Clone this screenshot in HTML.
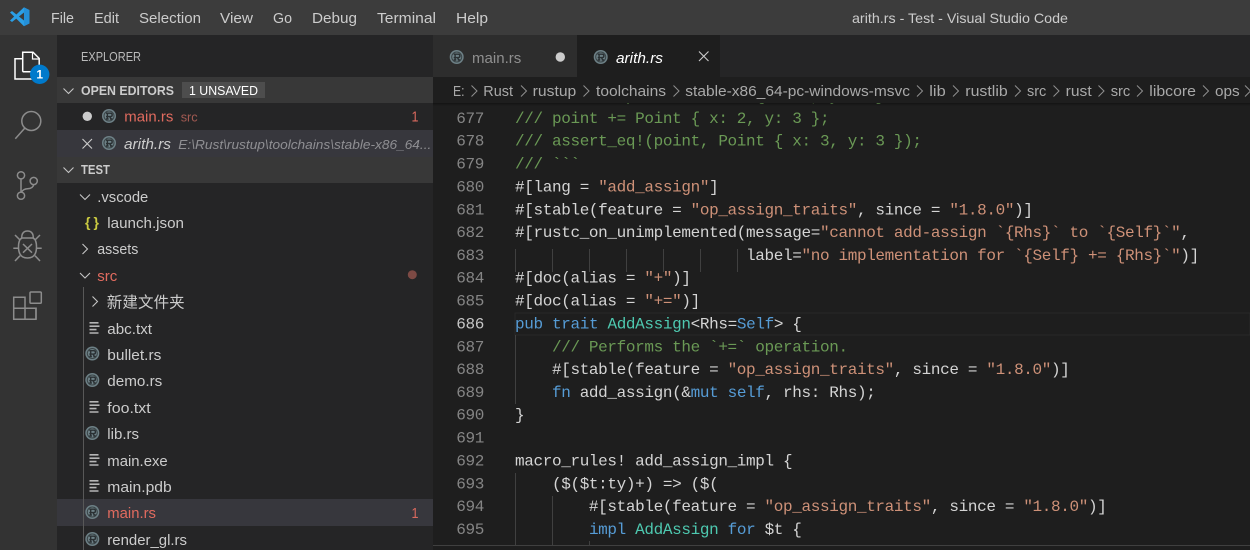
<!DOCTYPE html>
<html lang="en">
<head>
<meta charset="utf-8">
<title>arith.rs - Test - Visual Studio Code</title>
<style>
html,body{margin:0;padding:0;width:1250px;height:550px;overflow:hidden;background:#1e1e1e}
svg{display:block;position:absolute;left:0;top:0}
text{font-family:"Liberation Sans","Noto Sans CJK SC",sans-serif;white-space:pre}
.m{font-size:15px;fill:#ccc}
.s{font-size:15px;fill:#ccc}
.c{font-family:"Liberation Mono",monospace;font-size:16px;letter-spacing:-.36px;fill:#d4d4d4}
.n{font-family:"Liberation Mono",monospace;font-size:16px;letter-spacing:-.36px;fill:#858585;text-anchor:end}
.g{fill:#6a9955}.o{fill:#ce9178}.b{fill:#569cd6}.t{fill:#4ec9b0}
.bc{font-size:15px;fill:#a9a9a9}
.ch{fill:none;stroke:#c5c5c5;stroke-width:1.1}
.bch{fill:none;stroke:#8f8f8f;stroke-width:1}
.ai{fill:none;stroke:#8c8c8c;stroke-width:1.5}
.ig{stroke:#404040;stroke-width:1}
.tf{stroke:#b5b5b5;stroke-width:1.6}
</style>
</head>
<body>
<svg width="1250" height="550" viewBox="0 0 1250 550" xmlns="http://www.w3.org/2000/svg">
<defs>
<g id="ru">
<circle r="7" fill="#6d8086"/>
<circle r="5" fill="none" stroke="#3a4447" stroke-width="1"/>
<path d="M-3 -2.8H1.4Q3.2 -2.8 3.2 -1Q3.2 .6 1.4 .6H-3M-1.6 -2.8V3M.8 .6L2 3M-3 3H-.4M1 3H3.4" fill="none" stroke="#2a3033" stroke-width="1.4"/>
</g>
<g id="tx">
<path class="tf" d="M0 .8H9M0 4.2H10M0 7.6H7M0 11H9"/>
</g>
<linearGradient id="sh" x1="0" y1="0" x2="0" y2="1">
<stop offset="0" stop-color="#000" stop-opacity=".35"/>
<stop offset="1" stop-color="#000" stop-opacity="0"/>
</linearGradient>
</defs>

<!-- base areas -->
<rect x="0" y="0" width="1250" height="550" fill="#1e1e1e"/>
<rect x="0" y="0" width="1250" height="35" fill="#3c3c3c"/>
<rect x="0" y="35" width="57" height="515" fill="#333333"/>
<rect x="57" y="35" width="376" height="515" fill="#252526"/>

<!-- title bar -->
<path d="M24 7.3L29.5 10V23.5L24 26.2Z" fill="#2490d8"/>
<path d="M10 12.5L12 11L24 20.5V26.2Z" fill="#2b9fe6"/>
<path d="M10 20.5L12 22L24 12.5V7.3Z" fill="#2b9fe6"/>
<text class="m" x="51" y="23" textLength="23" lengthAdjust="spacingAndGlyphs">File</text>
<text class="m" x="94" y="23" textLength="25" lengthAdjust="spacingAndGlyphs">Edit</text>
<text class="m" x="139" y="23" textLength="62" lengthAdjust="spacingAndGlyphs">Selection</text>
<text class="m" x="220" y="23" textLength="33" lengthAdjust="spacingAndGlyphs">View</text>
<text class="m" x="273" y="23" textLength="19" lengthAdjust="spacingAndGlyphs">Go</text>
<text class="m" x="312" y="23" textLength="45" lengthAdjust="spacingAndGlyphs">Debug</text>
<text class="m" x="377" y="23" textLength="59" lengthAdjust="spacingAndGlyphs">Terminal</text>
<text class="m" x="456" y="23" textLength="32" lengthAdjust="spacingAndGlyphs">Help</text>
<text class="m" x="852" y="23" textLength="216" lengthAdjust="spacingAndGlyphs" style="font-size:14px">arith.rs - Test - Visual Studio Code</text>

<!-- activity bar -->
<path d="M22.7 71.7V52.2H33L39.2 58.4V66" fill="none" stroke="#fff" stroke-width="1.5"/>
<path d="M32.5 52.2V59H39.2" fill="none" stroke="#fff" stroke-width="1.2"/>
<path d="M22.7 71.7H31M22.7 58.8H15V79H32V72" fill="none" stroke="#fff" stroke-width="1.5"/>
<circle cx="39.7" cy="74.3" r="9.7" fill="#007acc"/>
<text x="39.7" y="78.6" text-anchor="middle" style="font-size:12px;font-weight:bold;fill:#fff">1</text>
<circle class="ai" cx="31.3" cy="121" r="9.5"/>
<path class="ai" d="M15.3 138.7L24.7 128.3"/>
<circle class="ai" cx="21" cy="175.3" r="3.6"/>
<circle class="ai" cx="33.7" cy="181" r="3.6"/>
<circle class="ai" cx="21" cy="195.7" r="3.6"/>
<path class="ai" d="M21 179V192M33.7 184.6Q33 188.5 27.5 188.8Q23.5 189 21.5 192"/>
<path class="ai" d="M21.7 238Q21.7 231 27.5 231Q33.3 231 33.3 238"/>
<path class="ai" d="M18.5 247Q18.5 239.5 22 238H33Q36.5 239.5 36.5 247Q36.5 258 27.5 258Q18.5 258 18.5 247Z"/>
<path class="ai" d="M23 244L32 252.7M32 244L23 252.7M13.3 248.3H18.5M36.5 248.3H41.7M15 235L20 240M40 235L35 240M15 261L20 255.7M40 261L35 255.7"/>
<rect class="ai" x="30" y="292" width="11.3" height="11.3" rx="1"/>
<path class="ai" d="M13.7 297.3H25V319.3H13.7ZM13.7 308.3H36V319.3H25"/>
<path class="ai" d="M25 308.3H36V319.3"/>

<!-- sidebar -->
<text x="81" y="61" textLength="60" lengthAdjust="spacingAndGlyphs" style="font-size:13px;fill:#bbb">EXPLORER</text>
<rect x="57" y="77" width="376" height="26" fill="#383838"/>
<path class="ch" d="M63.5 88.5L68.5 93.5L73.5 88.5"/>
<text x="81" y="95" textLength="93" lengthAdjust="spacingAndGlyphs" style="font-size:13px;font-weight:bold;fill:#ccc">OPEN EDITORS</text>
<rect x="182" y="82" width="83" height="16" fill="#4d4d4d"/>
<text x="189" y="95" textLength="69" lengthAdjust="spacingAndGlyphs" style="font-size:13px;fill:#fff">1 UNSAVED</text>

<circle cx="87.3" cy="116.3" r="4.7" fill="#ccc"/>
<use href="#ru" x="109" y="116"/>
<text class="s" x="124.3" y="121.5" textLength="49" lengthAdjust="spacingAndGlyphs" style="fill:#e16b5f">main.rs</text>
<text x="180.7" y="121.5" textLength="17" lengthAdjust="spacingAndGlyphs" style="font-size:13px;fill:#a35a52">src</text>
<text x="411.5" y="121.5" textLength="7" lengthAdjust="spacingAndGlyphs" style="font-size:15px;fill:#d9695e">1</text>

<rect x="57" y="130" width="376" height="27" fill="#37373d"/>
<path d="M82.5 139L92 148.5M92 139L82.5 148.5" stroke="#ccc" stroke-width="1.1" fill="none"/>
<use href="#ru" x="109" y="143"/>
<text class="s" x="124" y="149" textLength="47" lengthAdjust="spacingAndGlyphs" style="font-style:italic">arith.rs</text>
<text x="178.3" y="149" textLength="253" lengthAdjust="spacingAndGlyphs" style="font-size:13px;font-style:italic;fill:#8f8f93">E:\Rust\rustup\toolchains\stable-x86_64...</text>

<rect x="57" y="157" width="376" height="26" fill="#383838"/>
<path class="ch" d="M63.5 167.5L68.5 172.5L73.5 167.5"/>
<text x="81" y="174" textLength="29" lengthAdjust="spacingAndGlyphs" style="font-size:13px;font-weight:bold;fill:#ccc">TEST</text>

<rect x="57" y="499" width="376" height="27" fill="#37373d"/>
<path d="M83.5 287V550" stroke="#585858" stroke-width="1"/>

<path class="ch" d="M80 194.5L85 199.5L90 194.5"/>
<text class="s" x="97.3" y="202" textLength="51" lengthAdjust="spacingAndGlyphs">.vscode</text>
<text x="85" y="227" textLength="14" lengthAdjust="spacing" style="font-size:14px;font-weight:bold;fill:#cbcb41">{}</text>
<text class="s" x="107.3" y="228" textLength="76.7" lengthAdjust="spacingAndGlyphs">launch.json</text>
<path class="ch" d="M82.5 244L87.5 249L82.5 254"/>
<text class="s" x="97.3" y="254" textLength="41" lengthAdjust="spacingAndGlyphs">assets</text>
<path class="ch" d="M80 273L85 278L90 273"/>
<text class="s" x="97.3" y="281" textLength="20" lengthAdjust="spacingAndGlyphs" style="fill:#e16b5f">src</text>
<circle cx="412.3" cy="274.7" r="4.5" fill="#7d4a44"/>
<path class="ch" d="M92.5 296.5L97.5 301.5L92.5 306.5"/>
<text x="106.7" y="307.5" textLength="78" style="font-size:15.5px;fill:#ccc;font-family:'Liberation Sans','Noto Sans CJK SC',sans-serif">新建文件夹</text>
<use href="#tx" x="89.5" y="322"/>
<text class="s" x="107.3" y="334" textLength="44.7" lengthAdjust="spacingAndGlyphs">abc.txt</text>
<use href="#ru" x="92.3" y="353.5"/>
<text class="s" x="107.3" y="360" textLength="54" lengthAdjust="spacingAndGlyphs">bullet.rs</text>
<use href="#ru" x="92.3" y="380"/>
<text class="s" x="107.3" y="386" textLength="55" lengthAdjust="spacingAndGlyphs">demo.rs</text>
<use href="#tx" x="89.5" y="401"/>
<text class="s" x="107.3" y="413" textLength="43.4" lengthAdjust="spacingAndGlyphs">foo.txt</text>
<use href="#ru" x="92.3" y="433"/>
<text class="s" x="107.3" y="439" textLength="31.7" lengthAdjust="spacingAndGlyphs">lib.rs</text>
<use href="#tx" x="89.5" y="454"/>
<text class="s" x="107.3" y="466" textLength="60.4" lengthAdjust="spacingAndGlyphs">main.exe</text>
<use href="#tx" x="89.5" y="480"/>
<text class="s" x="107.3" y="492" textLength="64.4" lengthAdjust="spacingAndGlyphs">main.pdb</text>
<use href="#ru" x="92.3" y="512"/>
<text class="s" x="107.3" y="518" textLength="48.7" lengthAdjust="spacingAndGlyphs" style="fill:#e16b5f">main.rs</text>
<text x="411.5" y="518" textLength="7" lengthAdjust="spacingAndGlyphs" style="font-size:15px;fill:#d9695e">1</text>
<use href="#ru" x="92.3" y="539"/>
<text class="s" x="107.3" y="545" textLength="79.7" lengthAdjust="spacingAndGlyphs">render_gl.rs</text>

<!-- code -->
<rect x="515" y="313" width="735" height="22" fill="none" stroke="#282828" stroke-width="1"/>
<path class="ig" d="M515.5 249V272M552.5 249V272M589.5 249V272M626.5 249V272M663.5 249V272M700.5 249V272M737.5 249V272M515.5 335V404M515.5 473V545M552.5 496V545M589.5 541V545"/>

<g transform="translate(0,-.5)">
<text class="c g" x="515" y="101">/// let mut point = Point { x: 1, y: 1 };</text>
<text class="n" x="484" y="123.4">677</text><text class="c g" x="515" y="123.4">/// point += Point { x: 2, y: 3 };</text>
<text class="n" x="484" y="146.2">678</text><text class="c g" x="515" y="146.2">/// assert_eq!(point, Point { x: 3, y: 3 });</text>
<text class="n" x="484" y="169.1">679</text><text class="c g" x="515" y="169.1">/// &#96;&#96;&#96;</text>
<text class="n" x="484" y="191.9">680</text><text class="c" x="515" y="191.9">#[lang = <tspan class="o">"add_assign"</tspan>]</text>
<text class="n" x="484" y="214.8">681</text><text class="c" x="515" y="214.8">#[stable(feature = <tspan class="o">"op_assign_traits"</tspan>, since = <tspan class="o">"1.8.0"</tspan>)]</text>
<text class="n" x="484" y="237.6">682</text><text class="c" x="515" y="237.6">#[rustc_on_unimplemented(message=<tspan class="o">"cannot add-assign &#96;{Rhs}&#96; to &#96;{Self}&#96;"</tspan>,</text>
<text class="n" x="484" y="260.4">683</text><text class="c" x="515" y="260.4">                         label=<tspan class="o">"no implementation for &#96;{Self} += {Rhs}&#96;"</tspan>)]</text>
<text class="n" x="484" y="283.2">684</text><text class="c" x="515" y="283.2">#[doc(alias = <tspan class="o">"+"</tspan>)]</text>
<text class="n" x="484" y="306.1">685</text><text class="c" x="515" y="306.1">#[doc(alias = <tspan class="o">"+="</tspan>)]</text>
<text class="n" x="484" y="328.9" style="fill:#c6c6c6">686</text><text class="c" x="515" y="328.9"><tspan class="b">pub</tspan> <tspan class="b">trait</tspan> <tspan class="t">AddAssign</tspan>&lt;Rhs=<tspan class="b">Self</tspan>&gt; {</text>
<text class="n" x="484" y="351.8">687</text><text class="c g" x="515" y="351.8">    /// Performs the &#96;+=&#96; operation.</text>
<text class="n" x="484" y="374.6">688</text><text class="c" x="515" y="374.6">    #[stable(feature = <tspan class="o">"op_assign_traits"</tspan>, since = <tspan class="o">"1.8.0"</tspan>)]</text>
<text class="n" x="484" y="397.4">689</text><text class="c" x="515" y="397.4">    <tspan class="b">fn</tspan> add_assign(&amp;<tspan class="b">mut</tspan> <tspan class="b">self</tspan>, rhs: Rhs);</text>
<text class="n" x="484" y="420.2">690</text><text class="c" x="515" y="420.2">}</text>
<text class="n" x="484" y="443.1">691</text>
<text class="n" x="484" y="465.9">692</text><text class="c" x="515" y="465.9">macro_rules! add_assign_impl {</text>
<text class="n" x="484" y="488.8">693</text><text class="c" x="515" y="488.8">    ($($t:ty)+) =&gt; ($(</text>
<text class="n" x="484" y="511.6">694</text><text class="c" x="515" y="511.6">        #[stable(feature = <tspan class="o">"op_assign_traits"</tspan>, since = <tspan class="o">"1.8.0"</tspan>)]</text>
<text class="n" x="484" y="534.4">695</text><text class="c" x="515" y="534.4">        <tspan class="b">impl</tspan> <tspan class="t">AddAssign</tspan> <tspan class="b">for</tspan> $t {</text>
</g>
<rect x="433" y="545" width="817" height="5" fill="#1e1e1e"/>
<rect x="433" y="545" width="817" height="1" fill="#404040"/>

<!-- tabs -->
<rect x="433" y="35" width="817" height="42" fill="#252526"/>
<rect x="433" y="35" width="144" height="42" fill="#2d2d2d"/>
<rect x="577" y="35" width="143" height="42" fill="#1e1e1e"/>
<use href="#ru" x="456.7" y="57"/>
<text class="s" x="472" y="63" textLength="49.3" lengthAdjust="spacingAndGlyphs" style="fill:#8f8f8f">main.rs</text>
<circle cx="560.3" cy="57" r="4.7" fill="#ccc"/>
<use href="#ru" x="600.7" y="57"/>
<text class="s" x="616" y="63" textLength="47" lengthAdjust="spacingAndGlyphs" style="font-style:italic;fill:#fff">arith.rs</text>
<path d="M699 51.5L708.5 61M708.5 51.5L699 61" stroke="#ccc" stroke-width="1.1" fill="none"/>

<!-- breadcrumb -->
<rect x="433" y="77" width="817" height="26" fill="#1e1e1e"/>
<rect x="433" y="103" width="817" height="3" fill="url(#sh)"/>
<text class="bc" x="453" y="96" textLength="11.5" lengthAdjust="spacingAndGlyphs">E:</text>
<path class="bch" d="M471.5 85.5L477 91L471.5 96.5"/>
<text class="bc" x="483.3" y="96" textLength="29.7" lengthAdjust="spacingAndGlyphs">Rust</text>
<path class="bch" d="M521 85.5L526.5 91L521 96.5"/>
<text class="bc" x="532.7" y="96" textLength="43.6" lengthAdjust="spacingAndGlyphs">rustup</text>
<path class="bch" d="M583.5 85.5L589 91L583.5 96.5"/>
<text class="bc" x="596" y="96" textLength="70" lengthAdjust="spacingAndGlyphs">toolchains</text>
<path class="bch" d="M673.5 85.5L679 91L673.5 96.5"/>
<text class="bc" x="685.3" y="96" textLength="224.7" lengthAdjust="spacingAndGlyphs">stable-x86_64-pc-windows-msvc</text>
<path class="bch" d="M917 85.5L922.5 91L917 96.5"/>
<text class="bc" x="929.3" y="96" textLength="16.4" lengthAdjust="spacingAndGlyphs">lib</text>
<path class="bch" d="M953 85.5L958.5 91L953 96.5"/>
<text class="bc" x="965.3" y="96" textLength="42.4" lengthAdjust="spacingAndGlyphs">rustlib</text>
<path class="bch" d="M1015 85.5L1020.5 91L1015 96.5"/>
<text class="bc" x="1027" y="96" textLength="19.3" lengthAdjust="spacingAndGlyphs">src</text>
<path class="bch" d="M1053.5 85.5L1059 91L1053.5 96.5"/>
<text class="bc" x="1065.7" y="96" textLength="26" lengthAdjust="spacingAndGlyphs">rust</text>
<path class="bch" d="M1098.5 85.5L1104 91L1098.5 96.5"/>
<text class="bc" x="1110.7" y="96" textLength="19.6" lengthAdjust="spacingAndGlyphs">src</text>
<path class="bch" d="M1137 85.5L1142.5 91L1137 96.5"/>
<text class="bc" x="1149.3" y="96" textLength="46.7" lengthAdjust="spacingAndGlyphs">libcore</text>
<path class="bch" d="M1203 85.5L1208.5 91L1203 96.5"/>
<text class="bc" x="1215" y="96" textLength="24.7" lengthAdjust="spacingAndGlyphs">ops</text>
<path class="bch" d="M1245 85.5L1250.5 91L1245 96.5"/>
</svg>
</body>
</html>
